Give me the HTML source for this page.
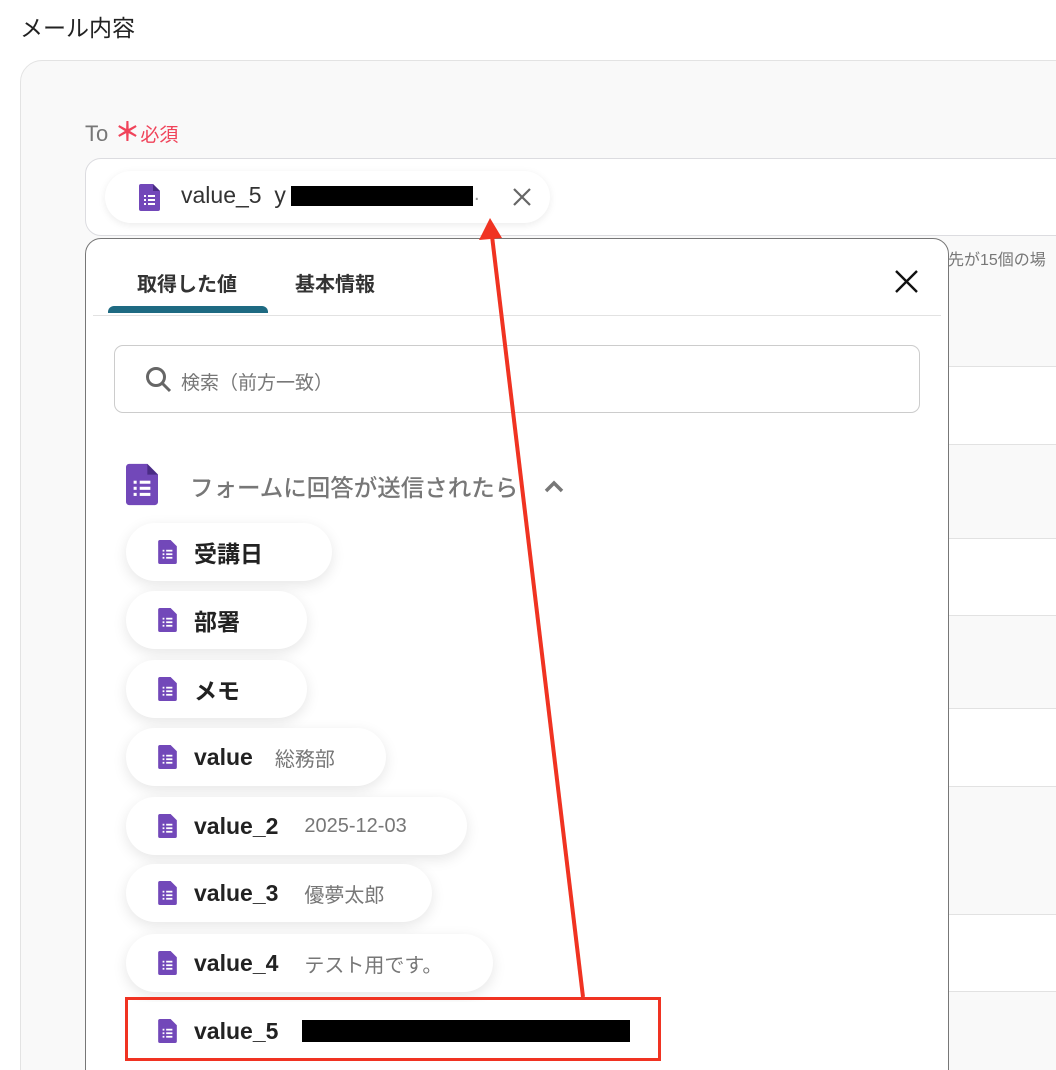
<!DOCTYPE html>
<html><head><meta charset="utf-8"><style>
*{box-sizing:border-box;margin:0;padding:0}
html,body{width:1056px;height:1070px;overflow:hidden}
body{background:#fff;font-family:"Liberation Sans","Noto Sans CJK JP",sans-serif;position:relative;color:#222}
.a{position:absolute}
.row{position:absolute;left:948px;width:120px;border-top:1px solid #e2e2e2}
.pill{position:absolute;left:126px;height:58px;border-radius:29px;background:#fff;box-shadow:0 4px 14px rgba(0,0,0,0.10);display:flex;align-items:center;padding-left:32px}
.pill svg{width:19px;height:24px;margin-right:17px;flex:none}
.pill b{font-size:23px;font-weight:bold;color:#222}
.pill span{font-size:20px;color:#777;margin-left:26px}
</style></head><body>
<div class="a" style="left:20px;top:9px;font-size:23px;color:#222">メール内容</div>
<div class="a" style="left:20px;top:60px;width:1060px;height:1040px;background:#f9f9f9;border:1px solid #e3e3e3;border-radius:22px"></div>
<div class="a" style="left:85px;top:112px;font-size:22px;color:#777">To <span style="color:#f0435a;font-size:26px;font-weight:bold">＊</span><span style="color:#f0435a;font-size:19px">必須</span></div>
<div class="a" style="left:85px;top:158px;width:1000px;height:78px;background:#fff;border:1px solid #dcdce0;border-radius:16px"></div>
<div class="a" style="left:105px;top:171px;width:445px;height:52px;background:#fff;border-radius:26px;box-shadow:0 2px 8px rgba(0,0,0,0.08)"></div>
<svg class="a" style="left:139px;top:184px" width="21" height="27" viewBox="0 0 21 27"><path d="M2 0h12l7 7v18a2 2 0 0 1-2 2H2a2 2 0 0 1-2-2V2a2 2 0 0 1 2-2z" fill="#7248b9"/><path d="M14 0l7 7h-7z" fill="#4a2c85"/><g fill="#fff"><rect x="5" y="11" width="2" height="2"/><rect x="9" y="11" width="7" height="2"/><rect x="5" y="15" width="2" height="2"/><rect x="9" y="15" width="7" height="2"/><rect x="5" y="19" width="2" height="2"/><rect x="9" y="19" width="7" height="2"/></g></svg>
<div class="a" style="left:181px;top:182px;font-size:23px;color:#333">value_5&nbsp; y</div>
<div class="a" style="left:291px;top:186px;width:182px;height:20px;background:#000"></div>
<div class="a" style="left:474px;top:183px;font-size:20px;color:#999">.</div>
<svg class="a" style="left:512px;top:187px" width="20" height="20"><path d="M2 2L18 18M18 2L2 18" stroke="#666" stroke-width="2.2"/></svg>
<div class="row" style="top:366px;height:78px;background:#fff"></div>
<div class="row" style="top:444px;height:94px;background:#f9f9f9"></div>
<div class="row" style="top:538px;height:77px;background:#fff"></div>
<div class="row" style="top:615px;height:93px;background:#f9f9f9"></div>
<div class="row" style="top:708px;height:78px;background:#fff"></div>
<div class="row" style="top:786px;height:128px;background:#f9f9f9"></div>
<div class="row" style="top:914px;height:77px;background:#fff"></div>
<div class="row" style="top:991px;height:80px;background:#f9f9f9"></div>
<div class="a" style="left:948px;top:246px;font-size:16px;color:#777;white-space:nowrap">先が15個の場</div>
<div class="a" style="left:85px;top:238px;width:864px;height:860px;background:#fff;border:1.5px solid #777;border-radius:16px"></div>
<div class="a" style="left:137px;top:268px;font-size:20px;font-weight:bold;color:#333">取得した値</div>
<div class="a" style="left:295px;top:268px;font-size:20px;font-weight:bold;color:#333">基本情報</div>
<div class="a" style="left:108px;top:306px;width:160px;height:7px;background:#1e6a82;border-radius:6px 6px 0 0"></div>
<div class="a" style="left:93px;top:315px;width:848px;height:1px;background:#e2e2e2"></div>
<svg class="a" style="left:894px;top:269px" width="25" height="25"><path d="M2 2L23 23M23 2L2 23" stroke="#111" stroke-width="2.4"/></svg>
<div class="a" style="left:114px;top:345px;width:806px;height:68px;border:1.5px solid #ccc;border-radius:9px"></div>
<svg class="a" style="left:145px;top:366px" width="28" height="28"><circle cx="11" cy="11" r="8.5" stroke="#666" stroke-width="3" fill="none"/><path d="M17 17L25 25" stroke="#666" stroke-width="3"/></svg>
<div class="a" style="left:181px;top:368px;font-size:19px;color:#777">検索（前方一致）</div>
<svg class="a" style="left:126px;top:463px" width="32" height="43" viewBox="0 0 21 27"><path d="M2 0h12l7 7v18a2 2 0 0 1-2 2H2a2 2 0 0 1-2-2V2a2 2 0 0 1 2-2z" fill="#7248b9"/><path d="M14 0l7 7h-7z" fill="#4a2c85"/><g fill="#fff"><rect x="5" y="11" width="2" height="2"/><rect x="9" y="11" width="7" height="2"/><rect x="5" y="15" width="2" height="2"/><rect x="9" y="15" width="7" height="2"/><rect x="5" y="19" width="2" height="2"/><rect x="9" y="19" width="7" height="2"/></g></svg>
<div class="a" style="left:190px;top:469px;font-size:23.5px;color:#777;font-weight:500">フォームに回答が送信されたら</div>
<svg class="a" style="left:543px;top:478px" width="22" height="16"><path d="M3 13L11 5L19 13" stroke="#777" stroke-width="3.5" fill="none"/></svg>

<div class="pill" style="top:523px;width:206px"><svg viewBox="0 0 21 27"><path d="M2 0h12l7 7v18a2 2 0 0 1-2 2H2a2 2 0 0 1-2-2V2a2 2 0 0 1 2-2z" fill="#7248b9"/><g fill="#fff"><rect x="5" y="11" width="2" height="2"/><rect x="9" y="11" width="7" height="2"/><rect x="5" y="15" width="2" height="2"/><rect x="9" y="15" width="7" height="2"/><rect x="5" y="19" width="2" height="2"/><rect x="9" y="19" width="7" height="2"/></g></svg><b>受講日</b></div>
<div class="pill" style="top:591px;width:181px"><svg viewBox="0 0 21 27"><path d="M2 0h12l7 7v18a2 2 0 0 1-2 2H2a2 2 0 0 1-2-2V2a2 2 0 0 1 2-2z" fill="#7248b9"/><g fill="#fff"><rect x="5" y="11" width="2" height="2"/><rect x="9" y="11" width="7" height="2"/><rect x="5" y="15" width="2" height="2"/><rect x="9" y="15" width="7" height="2"/><rect x="5" y="19" width="2" height="2"/><rect x="9" y="19" width="7" height="2"/></g></svg><b>部署</b></div>
<div class="pill" style="top:660px;width:181px"><svg viewBox="0 0 21 27"><path d="M2 0h12l7 7v18a2 2 0 0 1-2 2H2a2 2 0 0 1-2-2V2a2 2 0 0 1 2-2z" fill="#7248b9"/><g fill="#fff"><rect x="5" y="11" width="2" height="2"/><rect x="9" y="11" width="7" height="2"/><rect x="5" y="15" width="2" height="2"/><rect x="9" y="15" width="7" height="2"/><rect x="5" y="19" width="2" height="2"/><rect x="9" y="19" width="7" height="2"/></g></svg><b>メモ</b></div>
<div class="pill" style="top:728px;width:260px"><svg viewBox="0 0 21 27"><path d="M2 0h12l7 7v18a2 2 0 0 1-2 2H2a2 2 0 0 1-2-2V2a2 2 0 0 1 2-2z" fill="#7248b9"/><g fill="#fff"><rect x="5" y="11" width="2" height="2"/><rect x="9" y="11" width="7" height="2"/><rect x="5" y="15" width="2" height="2"/><rect x="9" y="15" width="7" height="2"/><rect x="5" y="19" width="2" height="2"/><rect x="9" y="19" width="7" height="2"/></g></svg><b>value</b><span style="margin-left:22px">総務部</span></div>
<div class="pill" style="top:797px;width:341px"><svg viewBox="0 0 21 27"><path d="M2 0h12l7 7v18a2 2 0 0 1-2 2H2a2 2 0 0 1-2-2V2a2 2 0 0 1 2-2z" fill="#7248b9"/><g fill="#fff"><rect x="5" y="11" width="2" height="2"/><rect x="9" y="11" width="7" height="2"/><rect x="5" y="15" width="2" height="2"/><rect x="9" y="15" width="7" height="2"/><rect x="5" y="19" width="2" height="2"/><rect x="9" y="19" width="7" height="2"/></g></svg><b>value_2</b><span>2025-12-03</span></div>
<div class="pill" style="top:864px;width:306px"><svg viewBox="0 0 21 27"><path d="M2 0h12l7 7v18a2 2 0 0 1-2 2H2a2 2 0 0 1-2-2V2a2 2 0 0 1 2-2z" fill="#7248b9"/><g fill="#fff"><rect x="5" y="11" width="2" height="2"/><rect x="9" y="11" width="7" height="2"/><rect x="5" y="15" width="2" height="2"/><rect x="9" y="15" width="7" height="2"/><rect x="5" y="19" width="2" height="2"/><rect x="9" y="19" width="7" height="2"/></g></svg><b>value_3</b><span>優夢太郎</span></div>
<div class="pill" style="top:934px;width:367px"><svg viewBox="0 0 21 27"><path d="M2 0h12l7 7v18a2 2 0 0 1-2 2H2a2 2 0 0 1-2-2V2a2 2 0 0 1 2-2z" fill="#7248b9"/><g fill="#fff"><rect x="5" y="11" width="2" height="2"/><rect x="9" y="11" width="7" height="2"/><rect x="5" y="15" width="2" height="2"/><rect x="9" y="15" width="7" height="2"/><rect x="5" y="19" width="2" height="2"/><rect x="9" y="19" width="7" height="2"/></g></svg><b>value_4</b><span>テスト用です。</span></div>
<div class="pill" style="top:1002px;width:530px;box-shadow:none;border-radius:0"><svg viewBox="0 0 21 27"><path d="M2 0h12l7 7v18a2 2 0 0 1-2 2H2a2 2 0 0 1-2-2V2a2 2 0 0 1 2-2z" fill="#7248b9"/><g fill="#fff"><rect x="5" y="11" width="2" height="2"/><rect x="9" y="11" width="7" height="2"/><rect x="5" y="15" width="2" height="2"/><rect x="9" y="15" width="7" height="2"/><rect x="5" y="19" width="2" height="2"/><rect x="9" y="19" width="7" height="2"/></g></svg><b>value_5</b></div>
<div class="a" style="left:302px;top:1020px;width:328px;height:22px;background:#000"></div>
<div class="a" style="left:125px;top:997px;width:536px;height:64px;border:3.5px solid #f03322"></div>
<svg class="a" style="left:0;top:0" width="1056" height="1070"><path d="M583 997L492 236" stroke="#f03322" stroke-width="4"/><path d="M490 218L479 240L502 238Z" fill="#f03322"/></svg>
</body></html>
